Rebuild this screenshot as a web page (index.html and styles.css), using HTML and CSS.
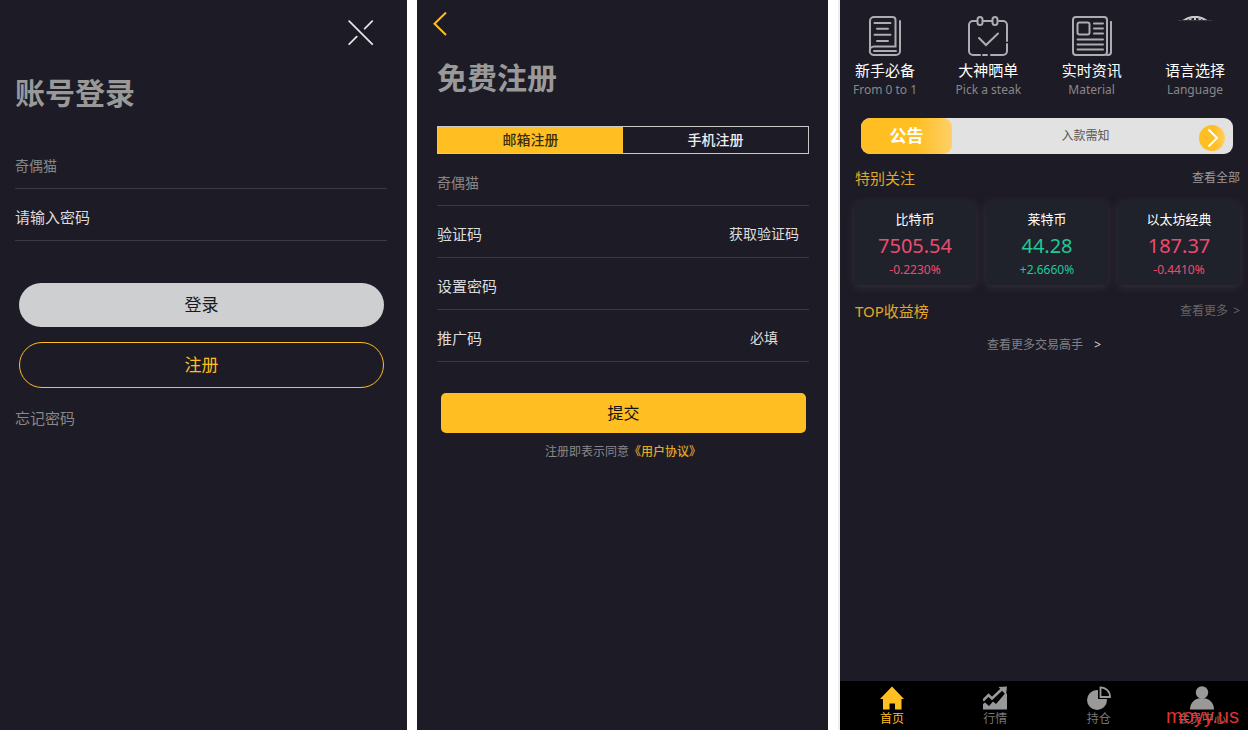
FILE: index.html
```html
<!DOCTYPE html>
<html lang="zh-CN">
<head>
  <meta charset="utf-8">
  <meta name="viewport" content="width=device-width, initial-scale=1">
  <title>账号登录</title>
  <link rel="stylesheet" href="styles.css">
</head>
<body>
<main class="screens">
  <!-- login -->
  <section class="screen">
    <header class="login-head">
      <button class="icon-btn" type="button" aria-label="关闭">
        <svg width="26" height="26" viewBox="0 0 26 26" fill="none" stroke="#e4e4e4" stroke-width="1.8" stroke-linecap="round">
          <path d="M1.2 1.2l23 23M24.2 1.2l-7.5 7.5M8.700 16.700l-7.500 7.500"/>
        </svg>
      </button>
    </header>
    <form class="login-form">
      <h1>账号登录</h1>
      <div class="field"><input class="account" type="text" value="奇偶猫" aria-label="账号"></div>
      <div class="field"><input type="password" placeholder="请输入密码" aria-label="密码"></div>
      <button class="pill pill-login" type="button">登录</button>
      <button class="pill pill-register" type="button">注册</button>
      <a class="forgot" href="#">忘记密码</a>
    </form>
  </section>

  <!-- register -->
  <section class="screen">
    <header class="register-head">
      <button class="icon-btn" type="button" aria-label="返回">
        <svg width="14" height="24" viewBox="0 0 14 24" fill="none" stroke="#ffbf22" stroke-width="2">
          <path d="M13 .5L1.500 11.700 13 23"/>
        </svg>
      </button>
    </header>
    <form class="register-form">
      <h1>免费注册</h1>
      <div class="switch">
        <button class="active" type="button">邮箱注册</button>
        <button type="button">手机注册</button>
      </div>
      <div class="field"><input class="account" type="text" value="奇偶猫" aria-label="邮箱"></div>
      <div class="field">
        <input type="text" placeholder="验证码" aria-label="验证码">
        <button class="suffix" type="button">获取验证码</button>
      </div>
      <div class="field"><input type="password" placeholder="设置密码" aria-label="设置密码"></div>
      <div class="field">
        <input type="text" placeholder="推广码" aria-label="推广码">
        <span class="suffix">必填</span>
      </div>
      <button class="submit" type="button">提交</button>
      <p class="agreement">注册即表示同意<a href="#">《用户协议》</a></p>
    </form>
  </section>

  <!-- home -->
  <section class="screen home">
    <nav class="shortcuts">
      <a href="#">
        <svg width="40" height="40" viewBox="0 0 40 40" fill="none" stroke="#adadb1" stroke-width="2" stroke-linecap="round">
          <path d="M5 34V5a4 4 0 0 1 4-4h18.500a3 3 0 0 1 3 3v26.500H9a4 4 0 0 0 0 8.500h22a4 4 0 0 0 4-4V5"/>
          <path d="M9.500 7h16M12 12.800h11M9.500 18.800h16M12 25h11M9 35h22"/>
        </svg>
        <strong>新手必备</strong>
        <small>From 0 to 1</small>
      </a>
      <a href="#">
        <svg width="40" height="40" viewBox="0 0 40 40" fill="none" stroke="#adadb1" stroke-width="2" stroke-linecap="round">
          <path d="M9 5H5a4 4 0 0 0-4 4v26a4 4 0 0 0 4 4h7M15 39h4M23 39h12a4 4 0 0 0 4-4v-7M39 25V9a4 4 0 0 0-4-4h-4M15 5h9"/>
          <rect x="9.500" y="1" width="5" height="8" rx="2.500"/>
          <rect x="24.500" y="1" width="5" height="8" rx="2.500"/>
          <path d="M11 22l7 7 12-11.500"/>
        </svg>
        <strong>大神晒单</strong>
        <small>Pick a steak</small>
      </a>
      <a href="#">
        <svg width="40" height="40" viewBox="0 0 40 40" fill="none" stroke="#adadb1" stroke-width="2" stroke-linecap="round">
          <rect x="1" y="1" width="34" height="38" rx="3"/>
          <path d="M35 39h1a3 3 0 0 0 3-3M39 6v26"/>
          <path d="M39 6v30"/>
          <rect x="5.500" y="6.500" width="12" height="12" rx="2"/>
          <path d="M22 7.500h9M22 12.500h9M22 17.500h9M5.500 23.500h25.500M5.500 28.500h25.500M5.500 33.500h25.500"/>
        </svg>
        <strong>实时资讯</strong>
        <small>Material</small>
      </a>
      <a href="#">
        <svg width="40" height="40" viewBox="0 0 40 40" fill="none" stroke="#c8c8ca" stroke-width="2">
          <path d="M8.500 4.500Q20-3 31.500 4.500M16.500 1.500l-2 3.300M23.500 1.500l2 3.300M20 1v3.500"/>
          <path d="M3 4.500h34" stroke="#38373f" stroke-width="1"/>
        </svg>
        <strong>语言选择</strong>
        <small>Language</small>
      </a>
    </nav>

    <a class="notice" href="#">
      <b>公告</b>
      <span>入款需知</span>
      <svg width="26" height="26" viewBox="0 0 26 26">
        <defs>
          <linearGradient id="gold">
            <stop offset=".6" stop-color="#ffbf22"/>
            <stop offset="1" stop-color="#ffcf68"/>
          </linearGradient>
        </defs>
        <circle cx="13" cy="13" r="13" fill="url(#gold)"/>
        <path d="M9.500 4.500l8.500 8.500-8.500 8.500" fill="none" stroke="#fff" stroke-width="2"/>
      </svg>
    </a>

    <div class="section-head">
      <h2>特别关注</h2>
      <a href="#">查看全部</a>
    </div>
    <div class="coins">
      <article class="coin down">
        <h3>比特币</h3>
        <b>7505.54</b>
        <span>-0.2230%</span>
      </article>
      <article class="coin up">
        <h3>莱特币</h3>
        <b>44.28</b>
        <span>+2.6660%</span>
      </article>
      <article class="coin down">
        <h3>以太坊经典</h3>
        <b>187.37</b>
        <span>-0.4410%</span>
      </article>
    </div>

    <div class="section-head top-list">
      <h2>TOP收益榜</h2>
      <a href="#">查看更多 <i>&gt;</i></a>
    </div>
    <a class="more" href="#">查看更多交易高手 <i>&gt;</i></a>

    <nav class="tabbar">
      <a class="active" href="#">
        <svg width="24" height="24" viewBox="0 0 24 24" fill="currentColor">
          <path d="M12 .5L24 13h-2.500v10.500H15V17.500H9.500v6H3V13H0z"/>
        </svg>
        首页
      </a>
      <a href="#">
        <svg width="24" height="24" viewBox="0 0 24 24">
          <path d="M0 18l2-1.500 4 3.500 4-4.500 3 2.500 9-10.500h2V23.500H0z" fill="#999"/>
          <path d="M0 14.500l5.500-5.500 3.500 3.500L19 3" fill="none" stroke="#999" stroke-width="2.600"/>
          <path d="M15.500 1L24 .5 23 9z" fill="#999"/>
        </svg>
        行情
      </a>
      <a href="#">
        <svg width="24" height="24" viewBox="0 0 24 24">
          <circle cx="10" cy="14" r="10" fill="#999"/>
          <path d="M11 0v13h13V0z" fill="#000"/>
          <path d="M13.500 1.300A9.500 9.500 0 0 1 23 11h-9.500z" fill="#000" stroke="#999" stroke-width="1.800"/>
        </svg>
        持仓
      </a>
      <a href="#">
        <svg width="24" height="24" viewBox="0 0 24 24" fill="#999">
          <circle cx="12" cy="6.500" r="6.200"/>
          <path d="M0 23.500c0-7 5-11.500 12-11.500s12 4.500 12 11.500z"/>
        </svg>
        会员中心
      </a>
      <span class="watermark">moyy.us</span>
    </nav>
  </section>
</main>
</body>
</html>
```
FILE: styles.css
```css
* {
    box-sizing: border-box;
}

body {
    margin: 0;
    background: #fff;
    color: #ddd;
    font-family: "Noto Sans", "Noto Sans CJK SC", sans-serif;
    font-size: 12px;
    line-height: 20px;
}

a {
    color: inherit;
    text-decoration: none;
}

button,
input {
    font: inherit;
    color: inherit;
    background: none;
    border: 0;
    padding: 0;
}

button {
    cursor: pointer;
}

svg {
    display: block;
    flex: none;
}

h1, h2, h3, p {
    margin: 0;
}

h1 {
    color: #999;
    font-size: 30px;
    line-height: 40px;
}

.screens {
    display: grid;
    grid-template-columns: 407fr 411fr 410fr;
    column-gap: 10px;
    min-height: 100vh;
}

.screen {
    display: flex;
    flex-direction: column;
    min-width: 0;
    background: #1d1b25;
}

.icon-btn {
    display: block;
}

/* forms */
form {
    display: flex;
    flex-direction: column;
}

.field {
    display: flex;
    align-items: center;
    padding-top: 4px;
    border-bottom: 1px solid #3b3a40;
}

.field input {
    flex: 1;
    min-width: 0;
    height: 47px;
    font-size: 15px;
    outline: none;
}

.field input::placeholder {
    color: #ddd;
    opacity: 1;
}

.field .account {
    color: #888;
    font-size: 14px;
}

/* login */
.login-head {
    display: flex;
    justify-content: flex-end;
    padding: 20px 33px 0;
}

.login-form {
    padding: 27px 20px 20px 15px;
}

.login-form h1 {
    margin-bottom: 24px;
}

.pill {
    margin: 0 3px 0 4px;
    border-radius: 23px;
    font-size: 17px;
}

.pill-login {
    height: 44px;
    margin-top: 42px;
    background: #cecfd1;
    color: #1a1a1a;
}

.pill-register {
    height: 46px;
    margin-top: 15px;
    border: 1px solid #ffbf22;
    color: #ffbf22;
}

.forgot {
    align-self: flex-start;
    margin-top: 20px;
    color: #888;
    font-size: 15px;
}

/* register */
.register-head {
    padding: 12px 16px 0;
}

.register-form {
    padding: 22px 19px 20px 20px;
}

.switch {
    display: flex;
    height: 28px;
    margin-top: 28px;
    border: 1px solid #c8c8c8;
}

.switch button {
    flex: 1;
    color: #eee;
    font-size: 14px;
    font-weight: 500;
}

.switch .active {
    background: #ffbf22;
    color: #3d2e0a;
}

.register-form .field {
    padding-top: 4px;
}

.suffix {
    width: 70px;
    margin-right: 10px;
    font-size: 14px;
    text-align: center;
}

.submit {
    height: 40px;
    margin: 31px 3px 0 4px;
    border-radius: 5px;
    background: #ffbf22;
    color: #111;
    font-size: 16px;
}

.agreement {
    margin-top: 9px;
    color: #888;
    text-align: center;
}

.agreement a {
    color: #e0a927;
    font-weight: 500;
}

/* home */
.home {
    border-left: 2px solid #eee;
}

.shortcuts {
    display: flex;
    justify-content: space-between;
    padding: 16px 8px 0 0;
}

.shortcuts a {
    display: flex;
    flex-direction: column;
    align-items: center;
    width: 90px;
}

.shortcuts strong {
    margin-top: 4px;
    color: #fff;
    font-size: 15px;
    font-weight: 400;
}

.shortcuts small {
    color: #888;
    font-size: 12px;
}

.notice {
    display: flex;
    align-items: center;
    height: 36px;
    margin: 18px 15px 0 21px;
    padding-right: 8px;
    border-radius: 9px;
    background: #e2e2e2;
    color: #555;
}

.notice b {
    width: 91px;
    border-radius: 9px;
    background: linear-gradient(90deg, #ffbf22 60%, #ffcf68);
    color: #fff;
    font-size: 17px;
    line-height: 36px;
    text-align: center;
}

.notice span {
    flex: 1;
    padding-left: 20px;
    text-align: center;
}

.notice svg {
    margin-top: 4px;
}

.section-head {
    display: flex;
    justify-content: space-between;
    margin: 14px 8px 0 15px;
    color: #999;
}

.section-head h2 {
    color: #e0a927;
    font-size: 15px;
    font-weight: 400;
}

.top-list {
    margin-top: 16px;
    color: #666;
}

.coins {
    display: grid;
    grid-template-columns: repeat(3, 1fr);
    gap: 10px;
    margin: 13px 8px 0 14px;
}

.coin {
    display: flex;
    flex-direction: column;
    padding: 8px 0 5px;
    border-radius: 5px;
    background: #1f222a;
    box-shadow: 0 2px 8px #37303a;
    text-align: center;
}

.coin h3 {
    color: #fff;
    font-size: 13px;
    font-weight: 400;
}

.coin b {
    margin-top: 3px;
    font-size: 20px;
    font-weight: 400;
    line-height: 28px;
}

.up {
    color: #20c997;
}

.down {
    color: #ea4c70;
}

.section-head i,
.more i {
    font-style: normal;
}

.section-head i {
    margin-left: 2px;
}

.more {
    align-self: center;
    margin-top: 14px;
    color: #808084;
}

.more i {
    margin-left: 8px;
    color: #ddd;
}

.tabbar {
    position: relative;
    display: flex;
    justify-content: space-between;
    margin-top: auto;
    padding: 5px 0 2px 6px;
    background: #000;
    color: #777;
}

.tabbar a {
    display: flex;
    flex-direction: column;
    align-items: center;
    width: 92px;
    line-height: 18px;
}

.tabbar .active {
    color: #ffbf22;
}

.watermark {
    position: absolute;
    right: 9px;
    bottom: 4px;
    color: #e03030;
    font-family: "Liberation Sans", Arial, sans-serif;
    font-size: 20px;
}
```
